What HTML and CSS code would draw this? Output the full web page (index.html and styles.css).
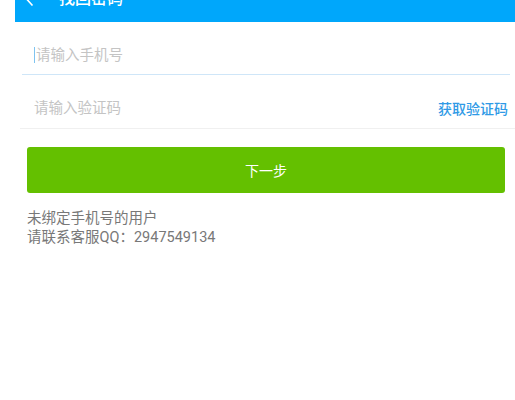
FILE: index.html
```html
<!DOCTYPE html>
<html lang="zh">
<head>
<meta charset="utf-8">
<link rel="stylesheet" href="styles.css">
</head>
<body>
<div class="app">
  <header class="bar">
    <span class="back">
      <svg width="8" height="12" viewBox="0 0 8 12"><path d="M6.5 0.5 L1.5 6 L6.5 11.5" fill="none" stroke="#fff" stroke-width="1.6"/></svg>
    </span>
    <span class="title">找回密码</span>
  </header>
  <div class="field field-phone">
    <span class="caret"></span>
    <span class="ph">请输入手机号</span>
  </div>
  <div class="field field-code">
    <span class="ph">请输入验证码</span>
    <span class="get">获取验证码</span>
  </div>
  <div class="btn-wrap">
    <div class="btn">下一步</div>
  </div>
  <div class="note">
    <div>未绑定手机号的用户</div>
    <div>请联系客服QQ：2947549134</div>
  </div>
</div>
</body>
</html>
```

FILE: styles.css
```css
html, body {
  margin: 0;
  padding: 0;
  background: #fff;
}
body {
  font-family: "Roboto", "Noto Sans CJK SC", sans-serif;
  width: 515px;
  height: 400px;
  overflow: hidden;
}
.app {
  padding-left: 15px;
}
.bar {
  height: 22px;
  background: #00a7fb;
  display: flex;
  align-items: flex-end;
  box-sizing: border-box;
  overflow: hidden;
}
.back {
  width: 8px;
  height: 12px;
  margin-left: 11px;
  margin-bottom: 16px;
  display: flex;
}
.title {
  color: #fff;
  font-size: 16px;
  line-height: 16px;
  margin-left: 25px;
  margin-bottom: 15px;
  font-weight: 500;
}
.field {
  display: flex;
  align-items: center;
  margin-left: 7px;
  font-size: 14.5px;
}
.field-phone {
  height: 38px;
  padding-top: 14px;
  border-bottom: 1px solid #cfe6f8;
  margin-right: 5px;
}
.field-code {
  height: 40px;
  padding-top: 13px;
  border-bottom: 1px solid #f0f0f0;
  margin-left: 5px;
  justify-content: space-between;
}
.caret {
  width: 1px;
  height: 16px;
  background: #7fc4f0;
  margin-left: 12px;
  margin-right: 1px;
}
.ph {
  color: #c4c4c4;
  line-height: 17px;
}
.field-code .ph {
  margin-left: 14px;
}
.get {
  color: #2f9ae6;
  font-size: 14px;
  font-weight: 500;
  margin-right: 7px;
}
.btn-wrap {
  padding: 18px 10px 0 12px;
}
.btn {
  height: 46px;
  background: #64c000;
  border-radius: 3px;
  color: #fff;
  font-size: 14px;
  display: flex;
  align-items: center;
  justify-content: center;
}
.note {
  margin-left: 12px;
  margin-top: 16px;
  color: #787878;
  font-size: 14.5px;
  line-height: 19px;
}
```
